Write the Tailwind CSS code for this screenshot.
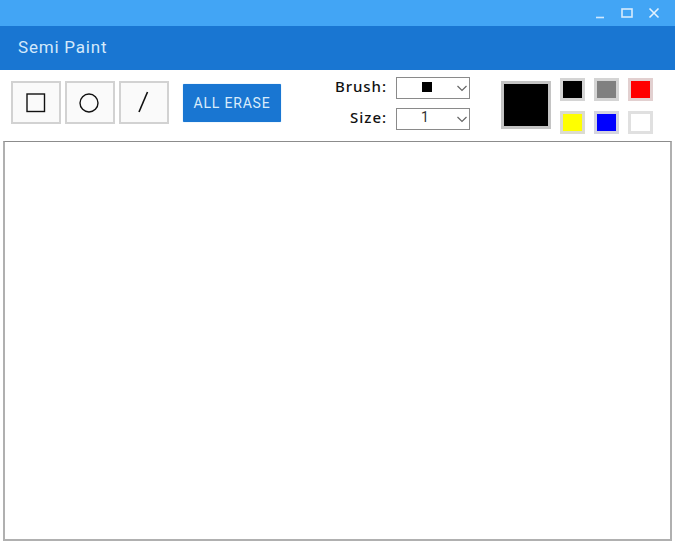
<!DOCTYPE html>
<html>
<head>
<meta charset="utf-8">
<script src="https://cdn.jsdelivr.net/npm/@tailwindcss/browser@4"></script>
</head>
<body class="bg-white">
<div class="w-[675px] h-[543px] flex flex-col overflow-hidden bg-white font-['Roboto',sans-serif]">
  <div class="h-[26px] bg-[#42a5f5] flex items-start justify-end pr-[5px]">
    <button class="w-[32px] h-[26px] flex items-center justify-center"><svg width="12" height="12" viewBox="0 0 12 12"><path d="M2 10.5H10" stroke="#cfe8fd" stroke-width="1.6"/></svg></button>
    <button class="w-[22px] h-[26px] flex items-center justify-center"><svg width="12" height="10" viewBox="0 0 12 10"><rect x="1" y="1" width="10" height="8" fill="none" stroke="#d6ebfd" stroke-width="1.6"/></svg></button>
    <button class="w-[32px] h-[26px] flex items-center justify-center"><svg width="12" height="12" viewBox="0 0 12 12"><path d="M1.5 1.5L10.5 10.5M10.5 1.5L1.5 10.5" stroke="#e3f2fe" stroke-width="1.6"/></svg></button>
  </div>
  <div class="h-[44px] bg-[#1976d2] flex items-center pl-[18px] pb-[1px]">
    <span class="text-[17px] leading-none text-[#d3e9fb] tracking-[0.8px]">Semi Paint</span>
  </div>
  <div class="h-[71px] flex pl-[11px]">
    <div class="flex gap-[4px] pt-[11px]">
      <button class="w-[50px] h-[43px] bg-[#fafafa] border-2 border-[#d2d2d2] flex items-center justify-center"><svg width="20" height="20" viewBox="0 0 20 20"><rect x="1" y="1" width="17.5" height="17.5" fill="none" stroke="#111" stroke-width="1.4"/></svg></button>
      <button class="w-[50px] h-[43px] bg-[#fafafa] border-2 border-[#d2d2d2] flex items-center justify-center"><svg class="mr-[3px]" width="20" height="20" viewBox="0 0 20 20"><circle cx="10" cy="10" r="9" fill="none" stroke="#111" stroke-width="1.4"/></svg></button>
      <button class="w-[50px] h-[43px] bg-[#fafafa] border-2 border-[#d2d2d2] flex items-center justify-center"><svg class="mr-[3px] mb-[2px]" width="14" height="22" viewBox="0 0 14 22"><path d="M11.5 1L3 21" stroke="#111" stroke-width="1.6"/></svg></button>
    </div>
    <div class="ml-[14px] pt-[14px]">
      <button class="w-[98px] h-[38px] bg-[#1976d2] rounded-[1px] text-[14px] tracking-[0.8px] text-[#d9ecfb] shadow-[0_0_1px_#64b5f6]">ALL ERASE</button>
    </div>
    <div class="ml-[54px] pt-[7px] flex flex-col gap-[9px]">
      <div class="flex items-center h-[22px] gap-[9px]">
        <span class="w-[52px] whitespace-nowrap flex justify-end mb-[4px] text-[15px] font-medium tracking-[0.95px] text-[#111] font-['Noto_Sans',sans-serif]">Brush:</span>
        <div class="w-[74px] h-[22px] border border-[#8a8a8a] bg-white flex items-center relative">
          <div class="w-[10px] h-[10px] bg-black ml-[25px] mb-[2px]"></div>
          <svg class="absolute right-[1px] top-[5px]" width="12" height="10" viewBox="0 0 12 10"><path d="M1.5 3L6 7.5L10.5 3" fill="none" stroke="#666" stroke-width="1.2"/></svg>
        </div>
      </div>
      <div class="flex items-center h-[22px] gap-[9px]">
        <span class="w-[52px] whitespace-nowrap flex justify-end mb-[4px] text-[15px] font-medium tracking-[0.95px] text-[#111] font-['Noto_Sans',sans-serif]">Size:</span>
        <div class="w-[74px] h-[22px] border border-[#8a8a8a] bg-white flex items-center relative">
          <span class="ml-[24px] mb-[4px] text-[14px] leading-none text-[#333]">1</span>
          <svg class="absolute right-[1px] top-[5px]" width="12" height="10" viewBox="0 0 12 10"><path d="M1.5 3L6 7.5L10.5 3" fill="none" stroke="#666" stroke-width="1.2"/></svg>
        </div>
      </div>
    </div>
    <div class="ml-[31px] pt-[11px]">
      <div class="w-[50px] h-[48px] bg-black border-[3px] border-[#c4c4c4]"></div>
    </div>
    <div class="ml-[9px] pt-[8px] grid grid-cols-[25px_25px_25px] grid-rows-[23px_23px] gap-x-[9px] gap-y-[10px] h-fit">
      <div class="bg-black border-[3px] border-[#d4d4d4]"></div>
      <div class="bg-[#808080] border-[3px] border-[#d4d4d4]"></div>
      <div class="bg-[#ff0000] border-[3px] border-[#e2d0d0]"></div>
      <div class="bg-[#ffff00] border-[3px] border-[#dcdcd0]"></div>
      <div class="bg-[#0000ff] border-[3px] border-[#d4d4e0]"></div>
      <div class="bg-white border-[3px] border-[#e0e0e0]"></div>
    </div>
  </div>
  <div class="mx-[3px] w-[669px] h-[400px] bg-white border-2 border-t border-[#b0b0b0] border-t-[#8c8c8c]"></div>
</div>
</body>
</html>
